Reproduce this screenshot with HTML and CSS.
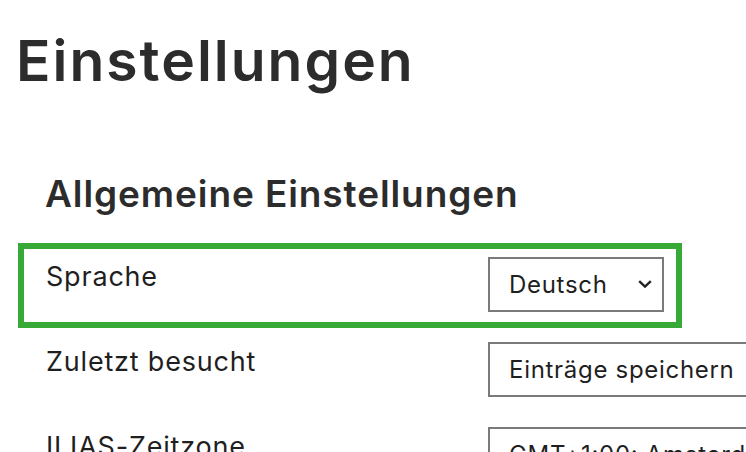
FILE: index.html
```html
<!DOCTYPE html>
<html lang="de">
<head>
  <meta charset="UTF-8" />
  <meta name="viewport" content="width=device-width, initial-scale=1.0"/>
  <title>Einstellungen</title>
  <link rel="stylesheet" href="styles.css">
</head>
<body>

  <div class="seite">
    <h1>Einstellungen</h1>

    <div class="abschnitt">
      <h2>Allgemeine Einstellungen</h2>

      <div class="zeile aktiv">
        <label>Sprache</label>
        <div class="auswahl">
          <span>Deutsch</span>
          <svg class="pfeil" width="14" height="8" viewBox="0 0 14 8"><path d="M1.2 1.2 L7 6.6 L12.8 1.2" fill="none" stroke="#222" stroke-width="2.4"/></svg>
        </div>
      </div>

      <div class="zeile">
        <label>Zuletzt besucht</label>
        <div class="auswahl">
          <span>Einträge speichern</span>
          <svg class="pfeil" width="14" height="8" viewBox="0 0 14 8"><path d="M1.2 1.2 L7 6.6 L12.8 1.2" fill="none" stroke="#222" stroke-width="2.4"/></svg>
        </div>
      </div>

      <div class="zeile">
        <label>ILIAS-Zeitzone</label>
        <div class="auswahl">
          <span>GMT+1:00: Amsterdam, Berlin, Bern, Rom, Stockholm, Wien</span>
          <svg class="pfeil" width="14" height="8" viewBox="0 0 14 8"><path d="M1.2 1.2 L7 6.6 L12.8 1.2" fill="none" stroke="#222" stroke-width="2.4"/></svg>
        </div>
      </div>
    </div>
  </div>

</body>
</html>
```

FILE: styles.css
```css
body {
  font-family: Inter, "Noto Sans", sans-serif;
  margin: 0;
  background: #ffffff;
  color: #222222;
  overflow: hidden;
}

.seite {
  padding: 27px 0 0 18px;
}

h1 {
  margin: 0 0 0 -2px;
  font-size: 57px;
  font-weight: 600;
  line-height: 1.2;
  letter-spacing: 2px;
  color: #2c2c2c;
}

.abschnitt {
  margin-top: 77px;
}

h2 {
  margin: 0 0 26px 27px;
  font-size: 37px;
  font-weight: 600;
  line-height: 1.2;
  letter-spacing: 0.9px;
  color: #2c2c2c;
}

.zeile {
  width: 664px;
  height: 85px;
  box-sizing: border-box;
  border: 6px solid transparent;
  display: grid;
  grid-template-columns: 442px max-content;
  align-items: start;
  padding: 8px 0 0 22px;
  white-space: nowrap;
}

.zeile.aktiv {
  border-color: #36a937;
}

label {
  display: block;
  margin-top: 2px;
  font-size: 27px;
  line-height: 35px;
  letter-spacing: 0.8px;
  color: #1f1f1f;
}

.auswahl {
  display: flex;
  align-items: center;
  gap: 30px;
  height: 55px;
  box-sizing: border-box;
  border: 2px solid #7a7a7a;
  padding: 0 10px 0 19px;
  font-size: 24px;
  letter-spacing: 0.7px;
  color: #1f1f1f;
  background: #ffffff;
}

.pfeil {
  flex: none;
}
```
